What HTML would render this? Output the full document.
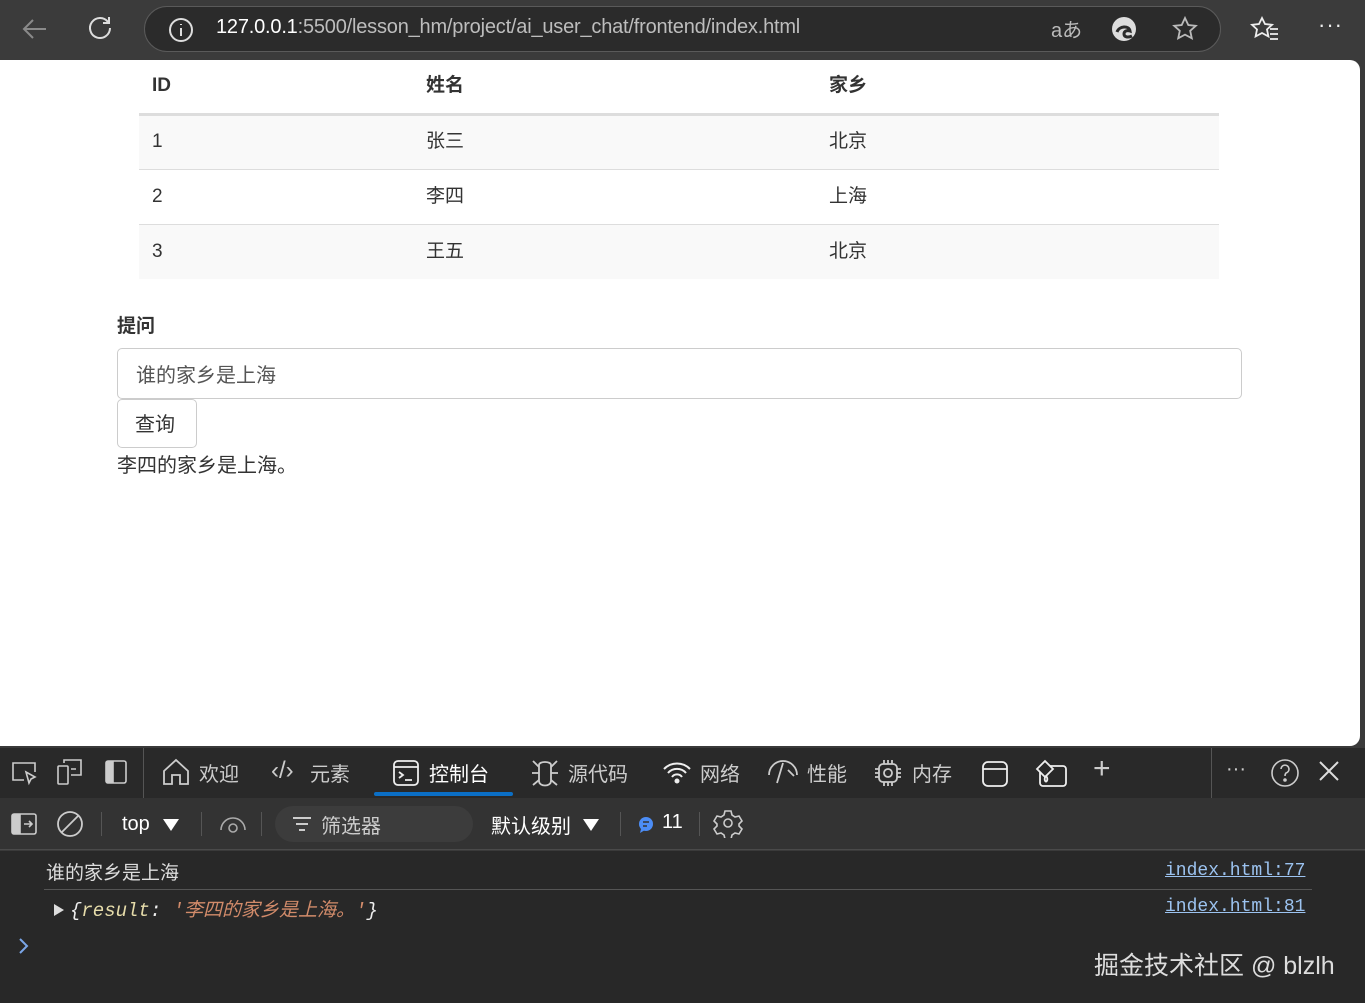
<!DOCTYPE html>
<html><head><meta charset="utf-8"><style>
*{box-sizing:border-box;margin:0;padding:0}
body{width:1365px;height:1003px;overflow:hidden;background:#3a3a3a;font-family:"Liberation Sans","Noto Sans CJK SC",sans-serif;position:relative}
.abs{position:absolute}
.top{left:0;top:0;width:1365px;height:60px;background:#3b3b3b}
.addr{left:144px;top:6px;width:1077px;height:46px;border:1.5px solid #5a5a5a;border-radius:23px;background:#2b2b2b}
.url{left:216px;top:16px;font-size:20px;color:#bdbdbd;font-family:"Liberation Sans",sans-serif;letter-spacing:-0.2px}
.url b{color:#fff;font-weight:normal}
.page{left:0;top:60px;width:1360px;height:686px;background:#fff;border-radius:0 10px 10px 0}
table{position:absolute;left:139px;top:60px;width:1080px;border-collapse:collapse;font-size:19px;color:#333}
th{text-align:left;font-weight:bold;height:54px;padding-left:13px;border-bottom:3px solid #ddd;line-height:24px;vertical-align:middle}
td{height:55px;padding-left:13px;border-top:1px solid #ddd;line-height:24px;vertical-align:middle}
tr.s td{background:#f9f9f9}
.lab{left:117px;top:311px;font-size:19px;font-weight:bold;color:#333}
.inp{left:117px;top:348px;width:1125px;height:51px;border:1px solid #ccc;border-radius:5px;font-size:20px;color:#555;padding:10px 18px}
.btn{left:117px;top:399px;width:80px;height:49px;border:1px solid #ccc;border-radius:5px;font-size:20px;color:#333;padding:8px 17px}
.ans{left:117px;top:449px;font-size:20px;color:#333}
.tabs{left:0;top:748px;width:1365px;height:50px;background:#292929;color:#ccc;font-size:20px}
.tb{left:0;top:798px;width:1365px;height:52px;background:#333;border-bottom:1px solid #4a4a4a;color:#ddd;font-size:20px}
.con{left:0;top:851px;width:1365px;height:152px;background:#282828}
.t{position:absolute;white-space:nowrap}
svg{position:absolute}
</style></head><body>
<div class="abs top"></div>
<svg style="left:20px;top:16px" width="30" height="26" viewBox="0 0 30 26" fill="none" stroke="#8a8a8a" stroke-width="2"><path d="M26 13H4M13 4L4 13l9 9"/></svg>
<svg style="left:86px;top:14px" width="28" height="28" viewBox="0 0 28 28" fill="none" stroke="#ddd" stroke-width="2"><path d="M22 8A10 10 0 1 0 24 14"/><path d="M23 3v6h-6"/></svg>
<div class="abs addr"></div>
<svg style="left:168px;top:17px" width="26" height="26" viewBox="0 0 26 26" fill="none" stroke="#ddd" stroke-width="2"><circle cx="13" cy="13" r="11"/><path d="M13 11v8M13 7v1"/></svg>
<div class="abs url"><b>127.0.0.1</b>:5500/lesson_hm/project/ai_user_chat/frontend/index.html</div>
<div class="abs" style="left:1051px;top:14px;color:#bbb;font-size:20px">aあ</div>
<svg style="left:1111px;top:16px" width="26" height="26" viewBox="0 0 26 26"><circle cx="13" cy="13" r="12" fill="#ddd"/><path d="M6 16c2-6 12-7 13-1-3-1-6 0-6 3s4 4 8 2" fill="none" stroke="#2b2b2b" stroke-width="3"/></svg>
<svg style="left:1171px;top:15px" width="28" height="28" viewBox="0 0 28 28" fill="none" stroke="#bbb" stroke-width="1.8"><path d="M14 3l3.3 7 7.5.8-5.6 5 1.6 7.5L14 19.6l-6.8 3.7 1.6-7.5-5.6-5 7.5-.8z"/></svg>
<svg style="left:1250px;top:15px" width="30" height="28" viewBox="0 0 30 28" fill="none" stroke="#eee" stroke-width="1.8"><path d="M12 3l3 6 7 .8-5 4.6 1.4 7L12 18l-6.4 3.4 1.4-7-5-4.6 7-.8z"/><path d="M20 14h8M20 19h8M20 24h8"/></svg>
<div class="abs" style="left:1318px;top:12px;color:#eee;font-size:22px;letter-spacing:1px">···</div>

<div class="abs page"></div>
<table>
<tr><th style="width:274px">ID</th><th style="width:403px">姓名</th><th>家乡</th></tr>
<tr class="s"><td>1</td><td>张三</td><td>北京</td></tr>
<tr><td>2</td><td>李四</td><td>上海</td></tr>
<tr class="s"><td>3</td><td>王五</td><td>北京</td></tr>
</table>
<div class="abs lab">提问</div>
<div class="abs inp">谁的家乡是上海</div>
<div class="abs btn">查询</div>
<div class="abs ans">李四的家乡是上海。</div>

<div class="abs tabs">
<svg style="left:10px;top:12px" width="28" height="26" viewBox="0 0 28 26" fill="none" stroke="#ccc" stroke-width="1.6"><path d="M14 20H3V3h22v9"/><path d="M16 12l3 11 2-4 4-2z"/></svg>
<svg style="left:56px;top:10px" width="30" height="30" viewBox="0 0 30 30" fill="none" stroke="#ccc" stroke-width="1.6"><rect x="2" y="8" width="10" height="18" rx="1"/><path d="M8 5V2h17v15H15M15 11h5"/></svg>
<svg style="left:104px;top:11px" width="24" height="26" viewBox="0 0 24 26" fill="none" stroke="#ccc" stroke-width="1.6"><rect x="2" y="2" width="20" height="22" rx="2"/><rect x="3" y="3" width="6" height="20" fill="#ccc"/></svg>
<div class="abs" style="left:143px;top:0;width:1px;height:50px;background:#555"></div>
<svg style="left:161px;top:9px" width="30" height="30" viewBox="0 0 30 30" fill="none" stroke="#ccc" stroke-width="1.8"><path d="M3 14L15 3l12 11v13h-8v-9h-8v9H3z"/></svg>
<div class="t" style="left:199px;top:10px">欢迎</div>
<div class="t" style="left:271px;top:9px;font-size:24px">‹/›</div>
<div class="t" style="left:310px;top:10px">元素</div>
<svg style="left:392px;top:11px" width="28" height="28" viewBox="0 0 28 28" fill="none" stroke="#eee" stroke-width="1.8"><rect x="2" y="2" width="24" height="24" rx="4"/><path d="M2 8h24M7 13l4 3-4 3M13 21h7"/></svg>
<div class="t" style="left:429px;top:10px;color:#fff">控制台</div>
<div class="abs" style="left:374px;top:44px;width:139px;height:4px;background:#0b6fc6;border-radius:2px"></div>
<svg style="left:530px;top:9px" width="30" height="32" viewBox="0 0 30 32" fill="none" stroke="#ccc" stroke-width="1.8"><path d="M9 8c0-4 12-4 12 0v16c0 6-12 6-12 0z"/><path d="M3 4l6 6M27 4l-6 6M2 16h7M21 16h7M3 28l6-5M27 28l-6-5"/></svg>
<div class="t" style="left:568px;top:10px">源代码</div>
<svg style="left:662px;top:12px" width="30" height="26" viewBox="0 0 30 26" fill="none" stroke="#eee" stroke-width="2"><path d="M2 9a18 18 0 0 1 26 0M6 13a12 12 0 0 1 18 0M10 17a6 6 0 0 1 10 0"/><circle cx="15" cy="21" r="1.5" fill="#eee"/></svg>
<div class="t" style="left:700px;top:10px">网络</div>
<svg style="left:766px;top:12px" width="34" height="26" viewBox="0 0 34 26" fill="none" stroke="#ccc" stroke-width="1.8"><path d="M3 15a14 14 0 0 1 28 0M17 3l-6 20M22 10l6 6"/></svg>
<div class="t" style="left:807px;top:10px">性能</div>
<svg style="left:873px;top:10px" width="30" height="30" viewBox="0 0 30 30" fill="none" stroke="#ccc" stroke-width="1.8"><rect x="6" y="6" width="18" height="18" rx="4"/><circle cx="15" cy="15" r="4"/><path d="M11 2v4M15 2v4M19 2v4M11 24v4M15 24v4M19 24v4M2 11h4M2 15h4M2 19h4M24 11h4M24 15h4M24 19h4"/></svg>
<div class="t" style="left:912px;top:10px">内存</div>
<svg style="left:981px;top:11px" width="28" height="30" viewBox="0 0 28 30" fill="none" stroke="#eee" stroke-width="1.8"><rect x="2" y="3" width="24" height="24" rx="5"/><path d="M2 10h24"/></svg>
<svg style="left:1034px;top:9px" width="34" height="32" viewBox="0 0 34 32" fill="none" stroke="#eee" stroke-width="1.8"><rect x="6" y="9" width="26" height="20" rx="3"/><path d="M3 12l8-8 8 8-8 8z" fill="#292929"/><path d="M12 25c-3-3 0-6 0-6s3 3 0 6"/></svg>
<div class="t" style="left:1093px;top:4px;font-size:30px;font-weight:200;color:#ccc">+</div>
<div class="abs" style="left:1211px;top:0;width:1px;height:50px;background:#555"></div>
<div class="t" style="left:1226px;top:10px;font-size:20px;color:#ccc">···</div>
<svg style="left:1270px;top:10px" width="30" height="30" viewBox="0 0 30 30" fill="none" stroke="#ccc" stroke-width="1.6"><circle cx="15" cy="15" r="13"/><path d="M11 11a4 4 0 1 1 5 4c-1 1-1 2-1 3"/><circle cx="15" cy="22" r="1" fill="#ccc"/></svg>
<svg style="left:1318px;top:12px" width="22" height="22" viewBox="0 0 22 22" stroke="#ddd" stroke-width="2"><path d="M2 2l18 18M20 2L2 20"/></svg>
</div>

<div class="abs tb">
<svg style="left:10px;top:14px" width="28" height="24" viewBox="0 0 28 24" fill="none" stroke="#ccc" stroke-width="1.6"><rect x="2" y="2" width="24" height="20" rx="2"/><rect x="3" y="3" width="7" height="18" fill="#ccc"/><path d="M14 12h8M19 9l3 3-3 3"/></svg>
<svg style="left:56px;top:12px" width="28" height="28" viewBox="0 0 28 28" fill="none" stroke="#ccc" stroke-width="1.8"><circle cx="14" cy="14" r="12"/><path d="M6 22L22 6"/></svg>
<div class="abs" style="left:101px;top:14px;width:1px;height:24px;background:#555"></div>
<div class="t" style="left:122px;top:15px;color:#fff">top</div>
<svg style="left:162px;top:20px" width="18" height="14"><path d="M1 1h16l-8 12z" fill="#fff"/></svg>
<div class="abs" style="left:201px;top:14px;width:1px;height:24px;background:#555"></div>
<svg style="left:218px;top:14px" width="30" height="24" viewBox="0 0 30 24" fill="none" stroke="#aaa" stroke-width="1.6"><path d="M3 18a12 12 0 0 1 24 0"/><circle cx="15" cy="16" r="4"/></svg>
<div class="abs" style="left:261px;top:14px;width:1px;height:24px;background:#555"></div>
<div class="abs" style="left:275px;top:8px;width:198px;height:36px;border-radius:18px;background:#3c3c3c"></div>
<svg style="left:291px;top:17px" width="22" height="18" stroke="#ccc" stroke-width="2"><path d="M2 3h18M5 9h12M8 15h6"/></svg>
<div class="t" style="left:321px;top:12px;color:#ccc">筛选器</div>
<div class="t" style="left:491px;top:12px;color:#fff">默认级别</div>
<svg style="left:582px;top:20px" width="18" height="14"><path d="M1 1h16l-8 12z" fill="#fff"/></svg>
<div class="abs" style="left:620px;top:14px;width:1px;height:24px;background:#555"></div>
<svg style="left:637px;top:18px" width="18" height="18"><circle cx="9" cy="8" r="7" fill="#4c8df6"/><path d="M4 13l-1 4 5-3z" fill="#4c8df6"/><path d="M6 6h6M6 10h4" stroke="#333" stroke-width="1.5"/></svg>
<div class="t" style="left:662px;top:13px;color:#fff">11</div>
<div class="abs" style="left:699px;top:14px;width:1px;height:24px;background:#555"></div>
<svg style="left:713px;top:10px" width="30" height="30" viewBox="0 0 30 30" fill="none" stroke="#ccc" stroke-width="1.6"><path d="M12 3h6l1 4 3 2 4-1 3 5-3 3v2l3 3-3 5-4-1-3 2-1 4h-6l-1-4-3-2-4 1-3-5 3-3v-2L1 13l3-5 4 1 3-2z"/><circle cx="15" cy="15" r="4"/></svg>
</div>

<div class="abs con">
<div class="t" style="left:46px;top:7px;font-size:19px;color:#ddd">谁的家乡是上海</div>
<div class="t" style="left:1165px;top:10px;font-size:18px;color:#9cc3f0;font-family:'Liberation Mono',monospace;text-decoration:underline">index.html:77</div>
<div class="abs" style="left:44px;top:38px;width:1268px;height:1px;background:#555"></div>
<svg style="left:53px;top:52px" width="12" height="14"><path d="M1 1l10 6-10 6z" fill="#ddd"/></svg>
<div class="t" style="left:70px;top:44px;font-size:19px;font-family:'Liberation Mono','Noto Sans CJK SC',monospace;font-style:italic;color:#eee">{<span style="color:#e6dcaa">result</span>: <span style="color:#d28b6a">'李四的家乡是上海。'</span>}</div>
<div class="t" style="left:1165px;top:46px;font-size:18px;color:#9cc3f0;font-family:'Liberation Mono',monospace;text-decoration:underline">index.html:81</div>
<svg style="left:18px;top:86px" width="12" height="18" stroke="#7aa6e8" stroke-width="2" fill="none"><path d="M2 2l7 7-7 7"/></svg>
<div class="t" style="left:1094px;top:95px;font-size:25px;color:#ddd">掘金技术社区 @ blzlh</div>
</div>
</body></html>
